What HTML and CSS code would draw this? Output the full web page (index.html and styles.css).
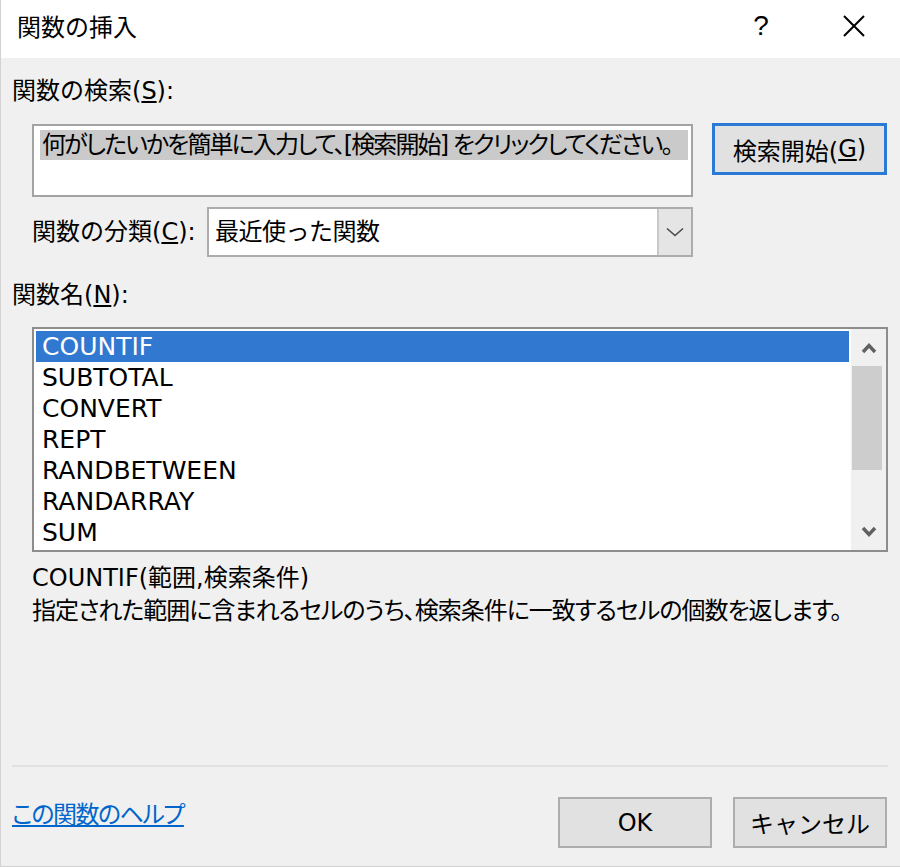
FILE: index.html
```html
<!DOCTYPE html>
<html lang="ja">
<head>
    <meta charset="UTF-8">
    <title>関数の挿入</title>
    <link rel="stylesheet" href="styles.css">
</head>
<body>
    <div class="dialog">
        <div class="titlebar">
            <span class="title">関数の挿入</span>
            <span class="tb-help">?</span>
            <span class="tb-close">
                <svg width="22" height="22" viewBox="0 0 22 22">
                    <path d="M1 1 L21 21 M21 1 L1 21" stroke="#000" stroke-width="2" fill="none"/>
                </svg>
            </span>
        </div>

        <div class="content">
            <div class="label">関数の検索(<u>S</u>):</div>

            <!-- search box + button -->
            <div class="search-row">
                <div class="search-box">
                    <div class="search-sel">何がしたいかを簡単に入力して、[検索開始] をクリックしてください。</div>
                </div>
                <button class="btn btn-search">検索開始(<u>G</u>)</button>
            </div>

            <div class="category-row">
                <span class="category-label">関数の分類(<u>C</u>):</span>
                <div class="select">
                    <span class="select-value">最近使った関数</span>
                    <span class="select-arrow">
                        <svg width="18" height="10" viewBox="0 0 18 10">
                            <path d="M1 1.5 L9 8.5 L17 1.5" stroke="#4a4a4a" stroke-width="1.6" fill="none"/>
                        </svg>
                    </span>
                </div>
            </div>

            <div class="label label-names">関数名(<u>N</u>):</div>

            <!-- function list -->
            <div class="listbox">
                <ul class="list-items">
                    <li class="selected">COUNTIF</li>
                    <li>SUBTOTAL</li>
                    <li>CONVERT</li>
                    <li>REPT</li>
                    <li>RANDBETWEEN</li>
                    <li>RANDARRAY</li>
                    <li>SUM</li>
                </ul>
                <div class="scrollbar">
                    <div class="sb-btn">
                        <svg width="16" height="12" viewBox="0 0 16 12">
                            <path d="M2 10 L8 3.5 L14 10" stroke="#606060" stroke-width="3.4" fill="none"/>
                        </svg>
                    </div>
                    <div class="sb-thumb"></div>
                    <div class="sb-track"></div>
                    <div class="sb-btn">
                        <svg width="16" height="12" viewBox="0 0 16 12">
                            <path d="M2 2 L8 8.5 L14 2" stroke="#606060" stroke-width="3.4" fill="none"/>
                        </svg>
                    </div>
                </div>
            </div>

            <div class="desc">
                <div class="desc-syntax">COUNTIF(範囲,検索条件)</div>
                <div class="desc-text">指定された範囲に含まれるセルのうち、検索条件に一致するセルの個数を返します。</div>
            </div>

            <div class="separator"></div>

            <div class="footer">
                <a class="help-link" href="#">この関数のヘルプ</a>
                <button class="btn btn-ok">OK</button>
                <button class="btn btn-cancel">キャンセル</button>
            </div>
        </div>
    </div>
</body>
</html>
```

FILE: styles.css
```css
* {
    margin: 0;
    padding: 0;
    box-sizing: border-box;
}

body {
    font-family: "DejaVu Sans", "Noto Sans CJK JP", sans-serif;
    font-size: 24px;
    color: #000;
    background: #f0f0f0;
}

.dialog {
    width: 900px;
    height: 867px;
    display: flex;
    flex-direction: column;
    background: #f0f0f0;
    border-left: 1px solid #d2d2d2;
    border-bottom: 1px solid #d2d2d2;
}

/* title bar */
.titlebar {
    height: 58px;
    flex-shrink: 0;
    display: flex;
    align-items: flex-start;
    padding-left: 16px;
    background: #fff;
}

.title {
    flex: 1;
    line-height: 56px;
}

.tb-help {
    width: 94px;
    text-align: center;
    font-family: "Liberation Sans", sans-serif;
    font-size: 28px;
    line-height: 52px;
}

.tb-close {
    width: 92px;
    height: 52px;
    display: flex;
    align-items: center;
    justify-content: center;
}

/* main area */
.content {
    flex: 1;
    padding: 18px 12px 0 11px;
}

.label {
    line-height: 30px;
}

.search-row {
    display: flex;
    align-items: flex-start;
    margin-top: 17px;
    padding-left: 20px;
}

.search-box {
    width: 661px;
    height: 73px;
    margin-top: 1px;
    padding: 4px 3px 0 6px;
    background: #fff;
    border: 2px solid #a3a3a3;
}

.search-sel {
    background: #cacaca;
    line-height: 30px;
    padding-left: 2px;
    white-space: nowrap;
    overflow: hidden;
    letter-spacing: -1.9px;
    font-feature-settings: "palt";
}

.btn {
    font: inherit;
    color: #000;
    background: #e1e1e1;
    border: 2px solid #adadad;
    display: flex;
    align-items: center;
    justify-content: center;
}

.btn-search {
    width: 175px;
    height: 52px;
    margin-left: 19px;
    border: 3px solid #2a7ad5;
}

.category-row {
    display: flex;
    align-items: center;
    margin-top: 10px;
    padding-left: 20px;
}

.category-label {
    width: 175px;
    line-height: 30px;
}

.select {
    width: 486px;
    height: 50px;
    display: flex;
    background: #fff;
    border: 2px solid #adadad;
}

.select-value {
    flex: 1;
    padding-left: 6px;
    line-height: 46px;
    letter-spacing: -0.5px;
}

.select-arrow {
    width: 34px;
    display: flex;
    align-items: center;
    justify-content: center;
    background: #e5e5e5;
    border-left: 2px solid #c9c9c9;
}

.label-names {
    margin-top: 23px;
}

/* list box */
.listbox {
    width: 856px;
    height: 225px;
    margin: 17px 0 0 20px;
    display: flex;
    background: #fff;
    border: 2px solid #8d8d8d;
}

.list-items {
    width: 817px;
    padding: 2px;
    list-style: none;
}

.list-items li {
    font-size: 25px;
    line-height: 31px;
    padding-left: 6px;
    white-space: nowrap;
}

.list-items li.selected {
    background: #3178d0;
    color: #fff;
}

.scrollbar {
    width: 35px;
    display: flex;
    flex-direction: column;
    background: #f0f0f0;
}

.sb-btn {
    height: 37px;
    display: flex;
    align-items: center;
    justify-content: center;
}

.sb-thumb {
    height: 104px;
    width: 30px;
    margin-left: 1px;
    background: #cdcdcd;
}

.sb-track {
    flex: 1;
}

.desc {
    height: 203px;
    margin-top: 10px;
    padding-left: 20px;
    line-height: 33px;
}

.desc-text {
    letter-spacing: -1px;
    font-feature-settings: "palt";
}

.separator {
    height: 2px;
    background: #e2e2e2;
}

.footer {
    display: flex;
    align-items: flex-start;
    margin-top: 30px;
}

.help-link {
    margin-top: 3px;
    margin-right: auto;
    line-height: 30px;
    color: #0066cc;
    text-decoration: underline;
    letter-spacing: -1.5px;
    font-feature-settings: "palt";
}

.btn-ok {
    width: 154px;
    height: 51px;
}

.btn-cancel {
    width: 154px;
    height: 51px;
    margin-left: 21px;
    margin-right: 1px;
}
```
